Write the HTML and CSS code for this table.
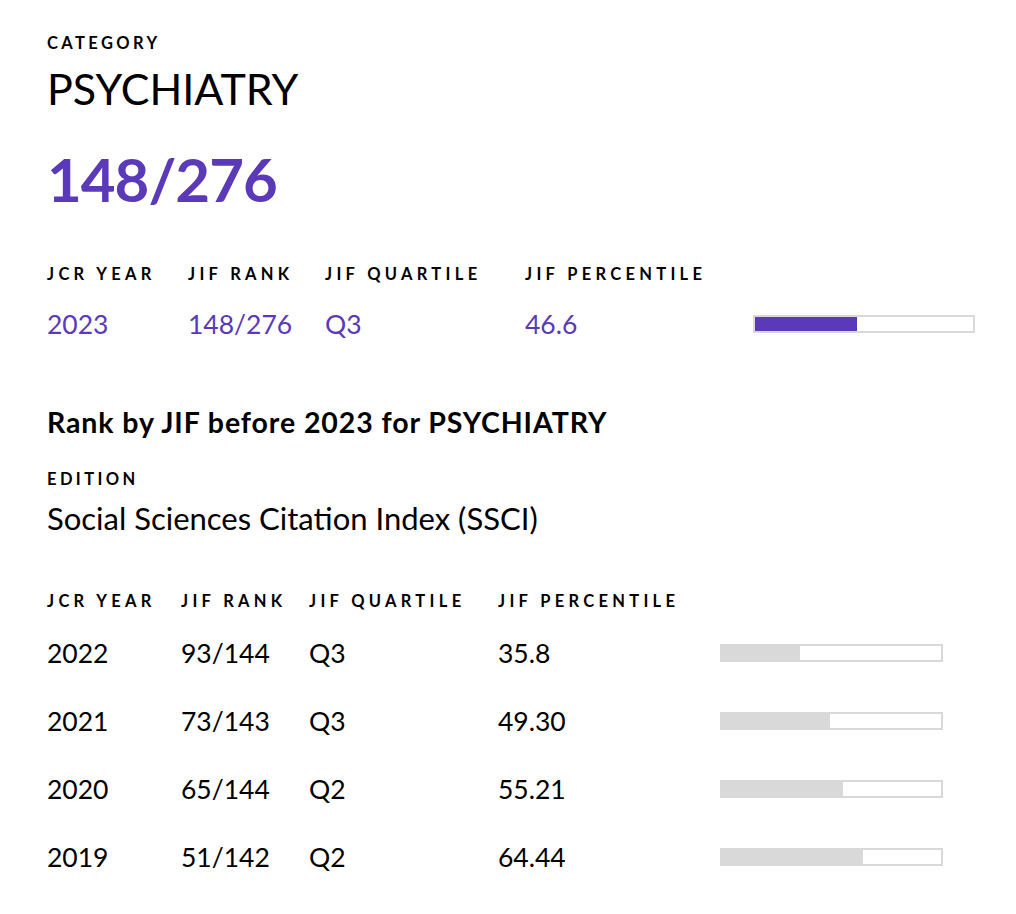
FILE: index.html
```html
<!DOCTYPE html>
<html lang="en">
<head>
<meta charset="utf-8">
<title>Category PSYCHIATRY</title>
<link rel="stylesheet" href="styles.css">
</head>
<body>
<main class="page">
  <div class="label label-category">CATEGORY</div>
  <h1 class="cat-name">PSYCHIATRY</h1>
  <div class="rank-big">148/276</div>

  <div class="table current">
    <div class="row head">
      <div class="label">JCR YEAR</div>
      <div class="label">JIF RANK</div>
      <div class="label">JIF QUARTILE</div>
      <div class="label">JIF PERCENTILE</div>
      <div></div>
    </div>
    <div class="row vals">
      <div>2023</div>
      <div>148/276</div>
      <div>Q3</div>
      <div>46.6</div>
      <div class="bar bar-purple"><span class="fill" style="width:46.6%"></span></div>
    </div>
  </div>

  <h2 class="sub-title">Rank by JIF before 2023 for PSYCHIATRY</h2>
  <div class="label label-edition">EDITION</div>
  <div class="edition">Social Sciences Citation Index (SSCI)</div>

  <div class="table history">
    <div class="row head">
      <div class="label">JCR YEAR</div>
      <div class="label">JIF RANK</div>
      <div class="label">JIF QUARTILE</div>
      <div class="label">JIF PERCENTILE</div>
      <div></div>
    </div>
    <div class="row item">
      <div>2022</div><div>93/144</div><div>Q3</div><div>35.8</div>
      <div class="bar bar-gray"><span class="fill" style="width:35.8%"></span></div>
    </div>
    <div class="row item">
      <div>2021</div><div>73/143</div><div>Q3</div><div>49.30</div>
      <div class="bar bar-gray"><span class="fill" style="width:49.3%"></span></div>
    </div>
    <div class="row item">
      <div>2020</div><div>65/144</div><div>Q2</div><div>55.21</div>
      <div class="bar bar-gray"><span class="fill" style="width:55.21%"></span></div>
    </div>
    <div class="row item">
      <div>2019</div><div>51/142</div><div>Q2</div><div>64.44</div>
      <div class="bar bar-gray"><span class="fill" style="width:64.44%"></span></div>
    </div>
  </div>
</main>
</body>
</html>
```

FILE: styles.css
```css
* { box-sizing: border-box; }
html, body { margin: 0; padding: 0; background: #fff; }
body {
  font-family: Lato, "Liberation Sans", sans-serif;
  color: #000;
}
.page {
  padding: 33px 0 0 47px;
}
.label {
  font-size: 16.5px;
  line-height: 20px;
  font-weight: 700;
  letter-spacing: 3.4px;
  white-space: nowrap;
}
.head .label { letter-spacing: 4.3px; }
.cat-name {
  margin: 11px 0 0;
  font-size: 43px;
  line-height: 50px;
  font-weight: 400;
}
.rank-big {
  margin-top: 30px;
  font-size: 60px;
  line-height: 70px;
  font-weight: 700;
  letter-spacing: -1px;
  color: #5a3ab8;
}
.row {
  display: grid;
  align-items: center;
}
.current .row { grid-template-columns: 141px 137px 200px 228px 222px; }
.current .head { margin-top: 50px; }
.current .vals {
  margin-top: 24px;
  font-size: 26.5px;
  line-height: 32px;
  color: #5a3ab8;
}
.bar {
  height: 18px;
  border: 2px solid #d9d9d9;
  background: #fff;
}
.bar .fill { display: block; height: 100%; }
.bar-purple .fill { background: #5a3ab8; }
.bar-gray .fill { background: #d9d9d9; }
.sub-title {
  margin: 66px 0 0;
  font-size: 28.5px;
  line-height: 32px;
  font-weight: 700;
  letter-spacing: 0.9px;
}
.label-edition { margin-top: 31px; }
.edition {
  margin-top: 11px;
  font-size: 31px;
  line-height: 36px;
}
.history .row { grid-template-columns: 134px 128px 189px 222px 223px; }
.history .head { margin-top: 55px; }
.history .item {
  font-size: 26.5px;
  line-height: 68px;
}
.history .head + .item { margin-top: 8px; }
```
